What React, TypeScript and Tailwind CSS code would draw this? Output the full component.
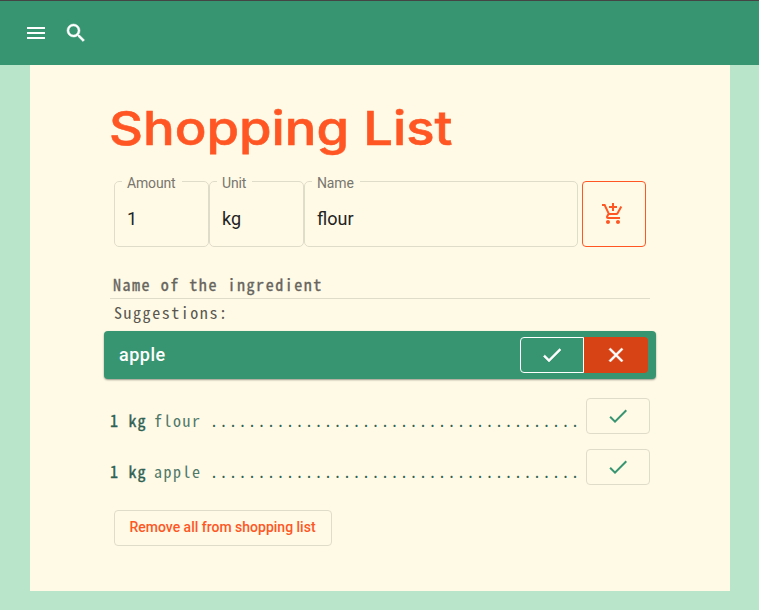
import React from "react";
import { MdAddShoppingCart, MdCheck, MdClose, MdMenu, MdSearch } from "react-icons/md";

const mono = "font-['Noto_Sans_Mono_CJK_JP','DejaVu_Sans_Mono',monospace]";
const strong = "font-normal [-webkit-text-stroke-width:0.35px]";
const thick = "[&>path:last-child]:stroke-white [&>path:last-child]:[stroke-width:0.5]";

function Field({ label, value, width }: { label: string; value: string; width: string }) {
  return (
    <fieldset className={`${width} h-[73px] rounded-[5px] border border-[#e0dcca] pl-[7px]`}>
      <legend className="h-[14px] pl-[5px] pr-[6px] text-[14px] leading-[18px] tracking-[-0.15px] text-[#79766e]">{label}</legend>
      <div className="pt-[19px] pl-[5px] text-[18px] leading-[24px] text-[#222]">{value}</div>
    </fieldset>
  );
}

function Item({ amount, name }: { amount: string; name: string }) {
  return (
    <li className="flex h-[51px] items-start">
      <div className={`${mono} flex h-[48px] w-[476px] overflow-hidden whitespace-pre pt-[10px] text-[16px] leading-[24px] tracking-[1.5px] text-[#2f6152]`}>
        <b className={`${strong} w-[44px] tracking-[1.2px]`}>{amount}</b>
        <span className="w-[56px] text-[#50796a]">{name}</span>
        <span>{".".repeat(39)}</span>
      </div>
      <button className="flex h-9 w-16 items-center justify-center rounded border border-[#e0dcca] pr-px text-[#389571]">
        <MdCheck size={24} />
      </button>
    </li>
  );
}

export default function App() {
  return (
    <div className="h-[610px] w-[759px] bg-[#b9e5ca] font-[Roboto,sans-serif]">
      <header className="flex h-[65px] items-center gap-4 border-t border-[#444] bg-[#389571] pl-6 text-white">
        <MdMenu size={24} />
        <MdSearch size={24} className={thick} />
      </header>
      <main className="ml-[30px] h-[526px] w-[700px] bg-[#fffae6] px-20 pt-[34px]">
        <h1 className="-ml-px h-[76px] origin-left scale-x-[1.12] whitespace-nowrap font-[Inter,sans-serif] text-[47px] font-medium leading-[58px] text-[#ff5624] [-webkit-text-stroke-width:0.6px]">
          Shopping List
        </h1>
        <div className="flex h-[83px] items-end pb-[11px] pl-1">
          <Field label="Amount" value="1" width="w-[95px]" />
          <Field label="Unit" value="kg" width="w-[95px]" />
          <Field label="Name" value="flour" width="w-[274px]" />
          <button className="ml-1 flex h-[66px] w-16 items-center justify-center rounded border border-[#ff5624] pr-[2px] text-[#ff5624]">
            <MdAddShoppingCart size={24} />
          </button>
        </div>
        <div className={`${mono} ${strong} mt-[15px] h-[26px] border-b border-[#e0dcca] pl-[3px] text-[16px] leading-[22px] tracking-[1.54px] text-[#66645d]`}>
          Name of the ingredient
        </div>
        <div className={`${mono} h-8 pl-1 pt-px text-[16px] leading-[24px] tracking-[1.54px] text-[#595750]`}>Suggestions:</div>
        <div className="-mx-1.5 flex h-12 items-center rounded bg-[#389571] pl-[15px] pr-2 text-white shadow-[0_1px_2px_rgba(0,0,0,0.4)]">
          <span className="flex-1 pb-[2px] text-[18px] font-medium tracking-[0.5px]">apple</span>
          <button className="flex h-9 w-16 items-center justify-center rounded-l border border-white"><MdCheck size={24} className={thick} /></button>
          <button className="flex h-9 w-16 items-center justify-center rounded-r bg-[#d84315] pr-px"><MdClose size={24} className={thick} /></button>
        </div>
        <ul className="pt-[19px]">
          <Item amount="1 kg" name="flour" />
          <Item amount="1 kg" name="apple" />
        </ul>
        <button className="ml-1 mt-[10px] h-9 w-[218px] rounded border border-[#e0dcca] pb-[2px] pr-px text-[14px] font-medium text-[#ff5624]">
          Remove all from shopping list
        </button>
      </main>
    </div>
  );
}
